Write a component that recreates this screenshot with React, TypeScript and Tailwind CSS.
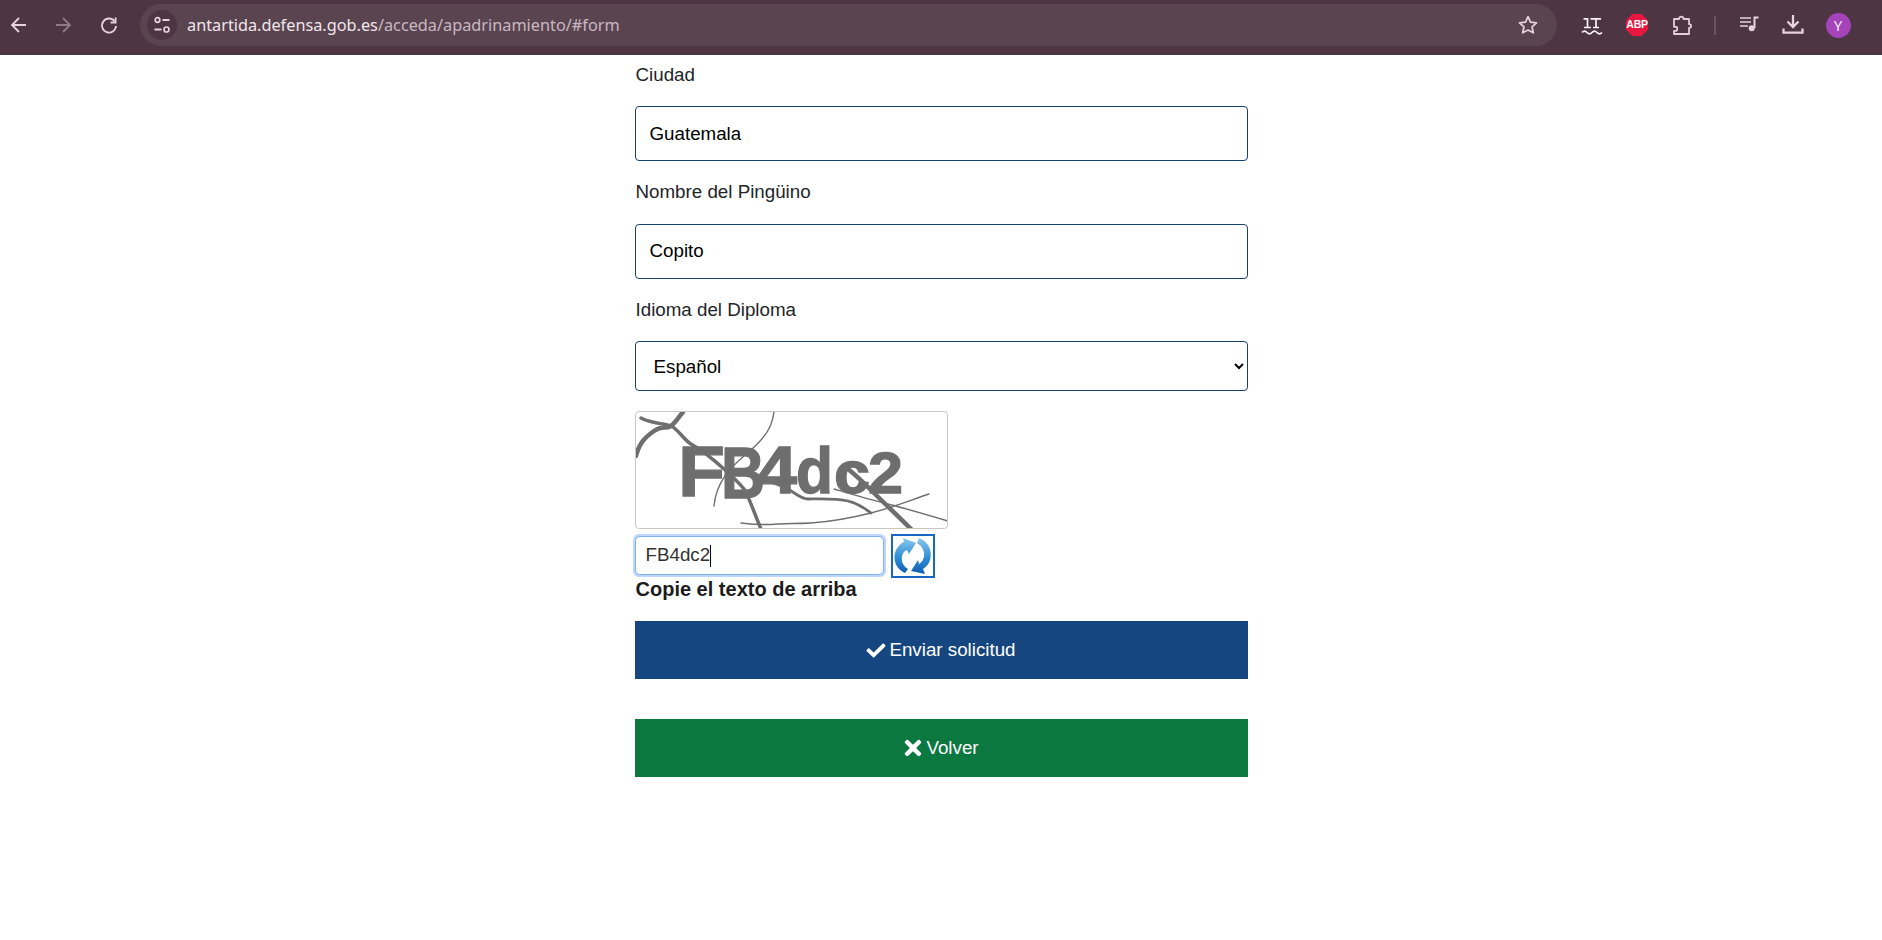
import React from "react";
import { FaCheck, FaTimes } from "react-icons/fa";

const iconColor = "#e6d3dd";

function Back({ color = iconColor, flip = false }: { color?: string; flip?: boolean }) {
  return (
    <svg width="20" height="20" viewBox="0 0 20 20" fill="none" style={flip ? { transform: "scaleX(-1)" } : undefined}>
      <path d="M17 10H3.5M10 3 3 10l7 7" stroke={color} strokeWidth="1.8" />
    </svg>
  );
}

function Reload() {
  return (
    <svg width="20" height="20" viewBox="0 0 20 20" fill="none">
      <path d="M15.6 6.3A7 7 0 1 0 17 11" stroke={iconColor} strokeWidth="1.8" />
      <path d="M16.6 2.5v5h-5" stroke={iconColor} strokeWidth="1.8" />
    </svg>
  );
}

function Tune() {
  return (
    <svg width="20" height="20" viewBox="0 0 20 20" fill="none">
      <circle cx="5.500" cy="5" r="2.300" stroke={iconColor} strokeWidth="1.700" />
      <path d="M10.500 5h7M2.500 14.500h7" stroke={iconColor} strokeWidth="1.800" />
      <circle cx="14.500" cy="14.500" r="2.500" stroke={iconColor} strokeWidth="1.700" />
    </svg>
  );
}

function Star() {
  return (
    <svg width="22" height="22" viewBox="0 0 22 22" fill="none">
      <path d="m11 2.600 2.500 5.600 6 .6-4.500 4 1.300 6L11 16.100l-5.300 2.700 1.300-6-4.500-4 6-.6z" stroke={iconColor} strokeWidth="1.700" strokeLinejoin="round" />
    </svg>
  );
}

function LT() {
  return (
    <svg width="24" height="24" viewBox="0 0 24 24" fill="none">
      <path d="M3.500 5.800H7.500V14.500M4 14.500h7M10.500 5.800H21M16 5.800v8.700M13 14.500h6" stroke="#fbf3f7" strokeWidth="1.700" />
      <path d="M2 19.500c1.700-1.800 3.300-1.800 5 0s3.300 1.800 5 0 3.300-1.800 5 0 3.300 1.800 5 0" stroke="#fbf3f7" strokeWidth="1.800" />
    </svg>
  );
}

function Abp() {
  return (
    <div className="flex h-[22px] w-[22px] items-center justify-center bg-[#e8173f] font-['Liberation_Sans',sans-serif] text-[10.5px] font-bold tracking-[-0.3px] text-white [clip-path:polygon(29%_0,71%_0,100%_29%,100%_71%,71%_100%,29%_100%,0_71%,0_29%)]">
      ABP
    </div>
  );
}

function Puzzle() {
  return (
    <svg width="22" height="22" viewBox="0 0 22 22" fill="none">
      <path d="M3 5h5c0-3.200 4.500-3.200 4.500 0H18v5.200c2.800 0 2.800 3.800 0 3.800v6H3v-3.200h2.500c1-1 1-3.300 0-4H3z" stroke="#e3cdd9" strokeWidth="1.800" strokeLinejoin="round" />
    </svg>
  );
}

function Music() {
  return (
    <svg width="22" height="22" viewBox="0 0 22 22" fill="none">
      <path d="M2 4h11M2 8h11M2 12h8" stroke={iconColor} strokeWidth="1.700" />
      <path d="M16.500 14V3.500H20.500" stroke={iconColor} strokeWidth="2" />
      <circle cx="13.700" cy="14.200" r="3" fill={iconColor} />
    </svg>
  );
}

function Download() {
  return (
    <svg width="24" height="24" viewBox="0 0 24 24" fill="none">
      <path d="M12 2v12M6.500 8.500 12 14l5.500-5.500" stroke={iconColor} strokeWidth="2.300" />
      <path d="M2.500 15.500v4.200h19v-4.200" stroke={iconColor} strokeWidth="2.300" />
    </svg>
  );
}

function Refresh() {
  return (
    <svg width="40" height="40" viewBox="0 0 40 40">
      <defs>
        <linearGradient id="rg" x1="0" y1="0" x2="0" y2="1">
          <stop offset="0" stopColor="#8cc8ee" />
          <stop offset="0.55" stopColor="#2f8ed6" />
          <stop offset="1" stopColor="#0f5fae" />
        </linearGradient>
      </defs>
      <path d="M12 37C3 33-1 23 3 14c2-4 5-7 8-8L10 2l13 5-7 11-2-4c-3 1-4 3-5 6-1 6 1 10 6 13z" fill="url(#rg)" />
      <path d="M26 2c9 3 14 13 11 22-1 4-4 7-7 9l2 5-14-3 7-11 1 4c3-2 4-4 5-7 1-6-2-11-7-14z" fill="url(#rg)" />
    </svg>
  );
}

function Captcha() {
  const letters: [string, number, number, number, number][] = [
    ["F", 42, 84, 70, 47],
    ["B", 85, 86, 72, 44],
    ["4", 121, 81, 66, 40],
    ["d", 160, 81, 64, 37],
    ["c", 198, 81, 60, 36],
    ["2", 232, 81, 58, 35],
  ];
  return (
    <svg width="311" height="116" viewBox="0 0 311 116" className="block">
      <g fill="#6e6e6e" stroke="#6e6e6e" strokeWidth="1.300" fontFamily="'Liberation Sans', sans-serif" fontWeight="700">
        {letters.map(([c, x, y, s, l]) => (
          <text key={x} x={x} y={y} fontSize={s} textLength={l} lengthAdjust="spacingAndGlyphs">
            {c}
          </text>
        ))}
      </g>
      <g fill="none" stroke="#6e6e6e" strokeLinecap="round" strokeLinejoin="round">
        <path d="M5 6C16 12 28 11 35 14S48 28 55 32 78 48 88 57 104 72 108 77 120 106 125 117" strokeWidth="3.500" />
        <path d="M0 44C3 32 8 26 18 19S30 18 35 14 42 6 47 0" strokeWidth="4.500" />
        <path d="M138 0C136 14 132 24 108 44 95 55 80 70 78 94" strokeWidth="1.400" />
        <path d="M212 57C222 65 230 73 238 81S262 104 275 117" strokeWidth="4.500" />
        <path d="M122 66C135 70 145 73 152 77S165 87 172 87 200 86 212 89 228 96 235 101" strokeWidth="2.800" />
        <path d="M198 77C215 82 235 88 248 91S295 104 312 109" strokeWidth="1.400" />
        <path d="M105 111C120 113 130 113 142 112S160 112 175 111 215 106 235 101 275 88 293 82" strokeWidth="1.400" />
      </g>
    </svg>
  );
}

const inputCls =
  "block h-[55px] w-full rounded-[4px] border border-[#17406d] bg-white pl-[14px] text-[18.75px] text-black outline-none";

export default function App() {
  return (
    <div className="min-h-[940px] bg-white font-['Liberation_Sans',Arial,sans-serif] text-[18.75px] text-[#212529]">
      <header className="flex h-[55px] items-center border-b border-[#463440] bg-[#4d3543] pb-[4px]">
        <button className="flex h-[40px] w-[38px] items-center justify-center"><Back /></button>
        <button className="ml-[3px] flex h-[40px] w-[44px] items-center justify-center"><Back color="#8f7b87" flip /></button>
        <button className="ml-[2px] flex h-[40px] w-[44px] items-center justify-center"><Reload /></button>
        <div className="ml-[9px] flex h-[42px] w-[1417px] items-center rounded-full bg-[#5a4450] pl-[7px] pr-[18px]">
          <div className="flex h-[30px] w-[30px] items-center justify-center rounded-full bg-[#4d3543]"><Tune /></div>
          <div className="ml-[10px] flex-1 font-['Noto_Sans',sans-serif] text-[16.27px] text-[#c8b8c1]">
            <span className="text-[#f0e5eb]">antartida.defensa.gob.es</span>/acceda/apadrinamiento/#form
          </div>
          <Star />
        </div>
        <div className="ml-[13px] flex h-[44px] w-[44px] items-center justify-center"><LT /></div>
        <div className="ml-px flex h-[44px] w-[44px] items-center justify-center"><Abp /></div>
        <div className="ml-px flex h-[44px] w-[44px] items-center justify-center"><Puzzle /></div>
        <div className="ml-[10px] h-[19px] w-[2px] bg-[#6b5361]" />
        <div className="ml-[11px] flex h-[44px] w-[44px] items-center justify-center"><Music /></div>
        <div className="flex h-[44px] w-[44px] items-center justify-center"><Download /></div>
        <div className="ml-px flex h-[44px] w-[44px] items-center justify-center">
          <div className="flex h-[25px] w-[25px] items-center justify-center rounded-full bg-[#a544ba] font-['Noto_Sans',sans-serif] text-[15px] text-[#f3e6f6]">Y</div>
        </div>
      </header>

      <main className="mx-auto w-[613px]">
        <label className="mt-px flex h-[38px] items-center pl-px">Ciudad</label>
        <input className={`mt-[12px] ${inputCls}`} defaultValue="Guatemala" />
        <label className="mt-[12px] flex h-[38px] items-center pl-px">Nombre del Pingüino</label>
        <input className={`mt-[13px] pb-[2px] ${inputCls}`} defaultValue="Copito" />
        <label className="mt-[12px] flex h-[38px] items-center pl-px">Idioma del Diploma</label>
        <select className="mt-[12px] block h-[50px] w-full rounded-[4px] border border-[#17406d] bg-white pl-[14px] text-[18.75px] text-black outline-none">
          <option>Español</option>
        </select>

        <div className="mt-[20px] h-[118px] w-[313px] overflow-hidden rounded-[4px] border border-[#c8c8c8]">
          <Captcha />
        </div>

        <div className="mt-[4px] flex items-start">
          <div className="ml-[-2px] mt-[1px] rounded-[6px] bg-[#bcd8fa] p-[2px]">
            <div className="flex h-[39px] w-[249px] items-center rounded-[5px] border border-[#7fb0ea] bg-white pl-[10px] text-[18.75px] text-[#333333]">
              FB4dc2<span className="h-[22px] w-px bg-black" />
            </div>
          </div>
          <button className="ml-[5px] mt-px flex h-[44px] w-[44px] items-center justify-center border-2 border-[#1a66c4] bg-white">
            <Refresh />
          </button>
        </div>

        <p className="flex h-[22px] items-center pl-px text-[20px] font-bold text-[#1c1c1c]">Copie el texto de arriba</p>

        <button className="mt-[21px] flex h-[58px] w-full items-center justify-center gap-[3px] bg-[#164680] text-[18.75px] text-white">
          <FaCheck className="h-[19px] w-[20px]" />
          Enviar solicitud
        </button>
        <button className="mt-[40px] flex h-[58px] w-full items-center justify-center gap-[3px] bg-[#0b7840] text-[18.75px] text-white">
          <FaTimes className="h-[24px] w-[20px]" />
          Volver
        </button>
      </main>
    </div>
  );
}
